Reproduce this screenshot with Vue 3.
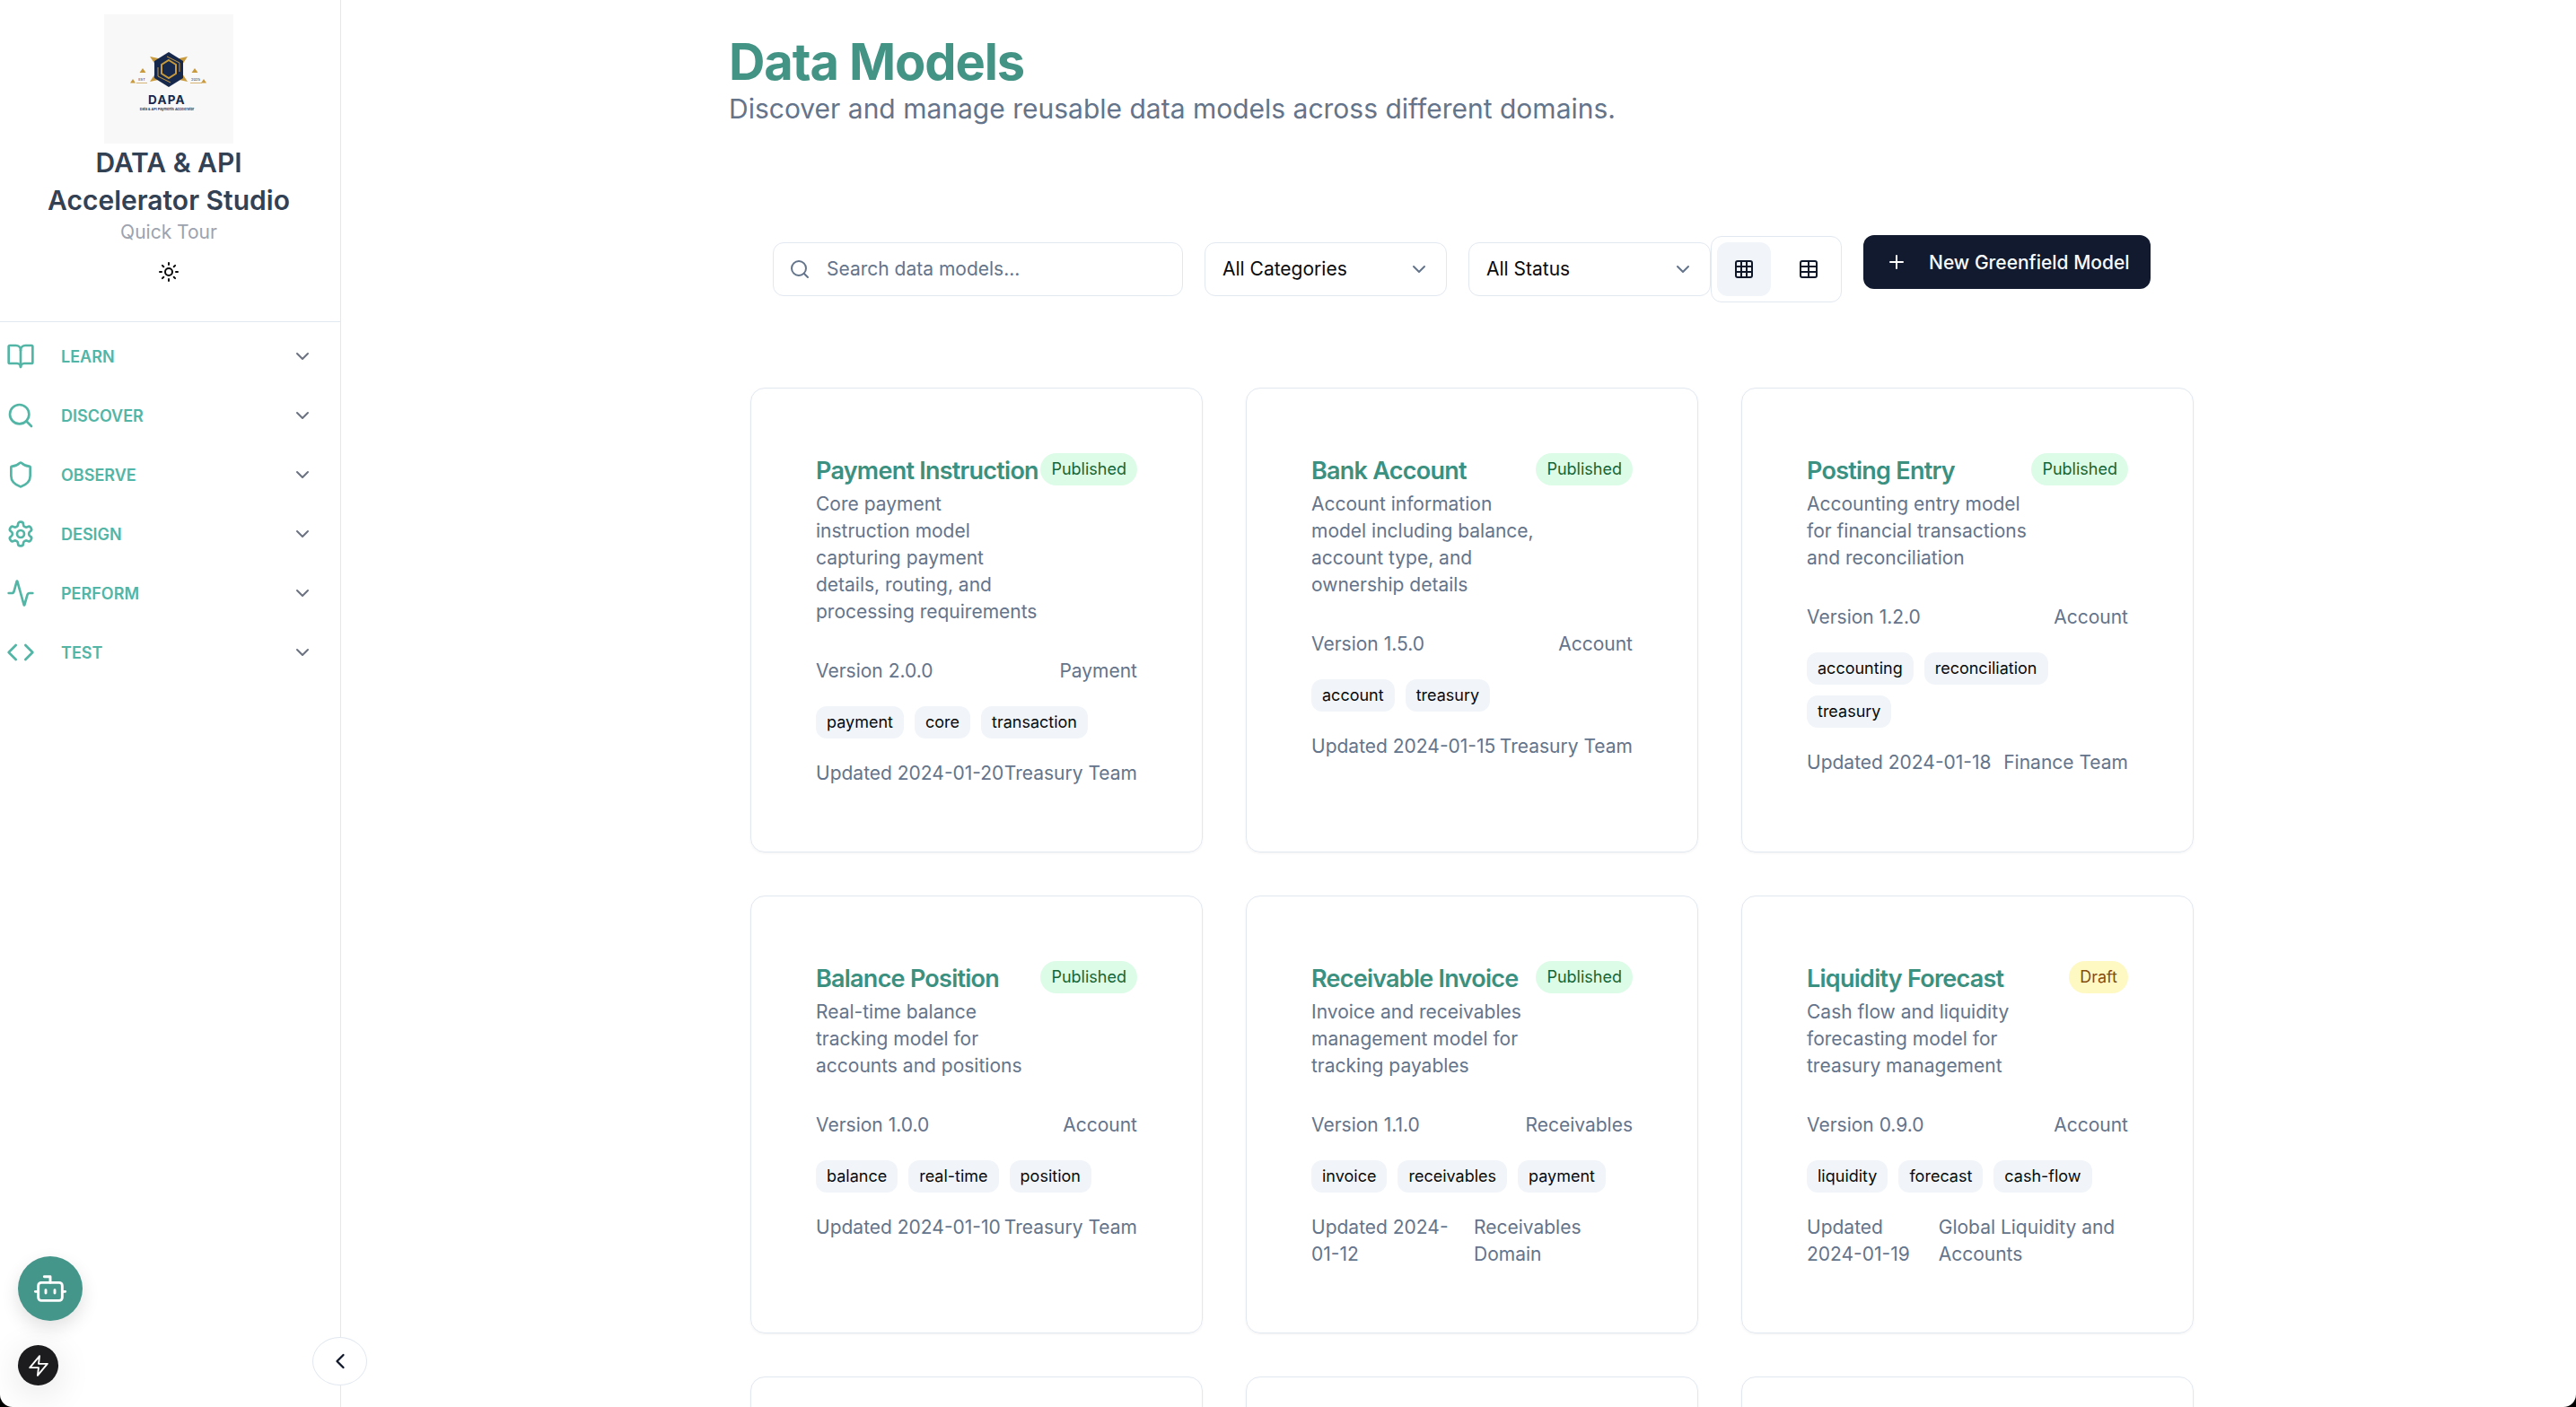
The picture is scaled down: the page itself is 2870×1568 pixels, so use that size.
<script setup>
const menu = [
  { label: 'LEARN', icon: 'book' },
  { label: 'DISCOVER', icon: 'search' },
  { label: 'OBSERVE', icon: 'shield' },
  { label: 'DESIGN', icon: 'gear' },
  { label: 'PERFORM', icon: 'pulse' },
  { label: 'TEST', icon: 'code' }
]

const models = [
  { name: 'Payment Instruction', status: 'Published', desc: 'Core payment instruction model capturing payment details, routing, and processing requirements', version: '2.0.0', category: 'Payment', tags: ['payment', 'core', 'transaction'], updated: '2024-01-20', owner: 'Treasury Team' },
  { name: 'Bank Account', status: 'Published', desc: 'Account information model including balance, account type, and ownership details', version: '1.5.0', category: 'Account', tags: ['account', 'treasury'], updated: '2024-01-15', owner: 'Treasury Team' },
  { name: 'Posting Entry', status: 'Published', desc: 'Accounting entry model for financial transactions and reconciliation', version: '1.2.0', category: 'Account', tags: ['accounting', 'reconciliation', 'treasury'], updated: '2024-01-18', owner: 'Finance Team' },
  { name: 'Balance Position', status: 'Published', desc: 'Real-time balance tracking model for accounts and positions', version: '1.0.0', category: 'Account', tags: ['balance', 'real-time', 'position'], updated: '2024-01-10', owner: 'Treasury Team' },
  { name: 'Receivable Invoice', status: 'Published', desc: 'Invoice and receivables management model for tracking payables', version: '1.1.0', category: 'Receivables', tags: ['invoice', 'receivables', 'payment'], updated: '2024-01-12', owner: 'Receivables Domain' },
  { name: 'Liquidity Forecast', status: 'Draft', desc: 'Cash flow and liquidity forecasting model for treasury management', version: '0.9.0', category: 'Account', tags: ['liquidity', 'forecast', 'cash-flow'], updated: '2024-01-19', owner: 'Global Liquidity and Accounts' }
]
</script>

<template>
  <div class="page">
    <aside class="sidebar">
      <div class="brand">
        <svg class="logo" viewBox="0 0 144 144">
          <rect width="144" height="144" fill="#f8f8f8" />
          <path d="M51 47l14 3-6 9zM93 47l-14 3 6 9zM51 75l14-3-6-9zM93 75l-14-3 6-9z" fill="#c99a3c" />
          <path d="M72 42l16 10v19l-16 10-16-10V52z" fill="#16294d" />
          <path d="M72 51l8 5v10l-8 5-8-5V56z" fill="none" stroke="#c99a3c" stroke-width="2" />
          <path d="M70 47l14 7v10M74 76l-14-7v-10" fill="none" stroke="#c99a3c" stroke-width="1" />
          <path d="M43 60l3.500 5h-7zM101 60l3.500 5h-7zM32 72l3 4.500h-6zM111 72l3 4.500h-6z" fill="#c99a3c" />
          <path d="M36 76.500h12M96 76.500h13" stroke="#c99a3c" stroke-width=".7" />
          <text x="42" y="74" class="logo-tiny">EST</text>
          <text x="102" y="74" class="logo-tiny">2025</text>
          <text x="70" y="100" class="logo-name">DAPA</text>
          <text x="70" y="106.500" class="logo-sub">Data &amp; API Payments Accelerator</text>
        </svg>
        <div class="brand-title">DATA &amp; API<br />Accelerator Studio</div>
        <div class="tour">Quick Tour</div>
        <svg class="sun" viewBox="0 0 24 24" fill="none" stroke="#0a0a0a" stroke-width="2" stroke-linecap="round">
          <circle cx="12" cy="12" r="4" />
          <path d="M12 2v2M12 20v2M4.900 4.900l1.400 1.400M17.700 17.700l1.400 1.400M2 12h2M20 12h2M6.300 17.700l-1.400 1.400M19.100 4.900l-1.400 1.400" />
        </svg>
      </div>
      <nav class="menu">
        <div v-for="item in menu" :key="item.label" class="menu-row">
          <svg class="menu-icon" viewBox="0 0 24 24" fill="none" stroke="currentColor" stroke-width="2" stroke-linecap="round" stroke-linejoin="round">
            <template v-if="item.icon === 'book'">
              <path d="M12 7v14" />
              <path d="M3 18a1 1 0 0 1-1-1V4a1 1 0 0 1 1-1h5a4 4 0 0 1 4 4 4 4 0 0 1 4-4h5a1 1 0 0 1 1 1v13a1 1 0 0 1-1 1h-6a3 3 0 0 0-3 3 3 3 0 0 0-3-3z" />
            </template>
            <template v-else-if="item.icon === 'search'">
              <path d="m21 21-4.300-4.300" />
              <circle cx="11" cy="11" r="8" />
            </template>
            <path v-else-if="item.icon === 'shield'" d="M20 13c0 5-3.500 7.500-7.660 8.950a1 1 0 0 1-.67-.01C7.500 20.500 4 18 4 13V6a1 1 0 0 1 1-1c2 0 4.500-1.200 6.240-2.720a1.170 1.170 0 0 1 1.520 0C14.510 3.810 17 5 19 5a1 1 0 0 1 1 1z" />
            <template v-else-if="item.icon === 'gear'">
              <path d="M12.220 2h-.44a2 2 0 0 0-2 2v.18a2 2 0 0 1-1 1.730l-.43.25a2 2 0 0 1-2 0l-.15-.08a2 2 0 0 0-2.730.73l-.22.38a2 2 0 0 0 .73 2.730l.15.1a2 2 0 0 1 1 1.720v.51a2 2 0 0 1-1 1.740l-.15.09a2 2 0 0 0-.73 2.730l.22.38a2 2 0 0 0 2.730.73l.15-.08a2 2 0 0 1 2 0l.43.25a2 2 0 0 1 1 1.730V20a2 2 0 0 0 2 2h.44a2 2 0 0 0 2-2v-.18a2 2 0 0 1 1-1.730l.43-.25a2 2 0 0 1 2 0l.15.08a2 2 0 0 0 2.730-.73l.22-.39a2 2 0 0 0-.73-2.730l-.15-.08a2 2 0 0 1-1-1.740v-.5a2 2 0 0 1 1-1.740l.15-.09a2 2 0 0 0 .73-2.730l-.22-.38a2 2 0 0 0-2.730-.73l-.15.08a2 2 0 0 1-2 0l-.43-.25a2 2 0 0 1-1-1.730V4a2 2 0 0 0-2-2z" />
              <circle cx="12" cy="12" r="3" />
            </template>
            <path v-else-if="item.icon === 'pulse'" d="M22 12h-2.480a2 2 0 0 0-1.930 1.460l-2.350 8.360a.25.25 0 0 1-.48 0L9.240 2.180a.25.25 0 0 0-.48 0l-2.350 8.360A2 2 0 0 1 4.490 12H2" />
            <template v-else>
              <path d="m16 18 6-6-6-6" />
              <path d="m8 6-6 6 6 6" />
            </template>
          </svg>
          <span class="menu-label">{{ item.label }}</span>
          <svg class="menu-chevron" viewBox="0 0 24 24" fill="none" stroke="currentColor" stroke-width="2" stroke-linecap="round" stroke-linejoin="round"><path d="m6 9 6 6 6-6" /></svg>
        </div>
      </nav>
      <button class="collapse">
        <svg viewBox="0 0 24 24" fill="none" stroke="#0f172a" stroke-width="2" stroke-linecap="round" stroke-linejoin="round"><path d="m15 18-6-6 6-6" /></svg>
      </button>
    </aside>

    <main class="main">
      <h1 class="title">Data Models</h1>
      <p class="subtitle">Discover and manage reusable data models across different domains.</p>

      <div class="toolbar">
        <div class="filters">
          <div class="search">
            <svg viewBox="0 0 24 24" fill="none" stroke="#64748b" stroke-width="2" stroke-linecap="round"><path d="m21 21-4.300-4.300" /><circle cx="11" cy="11" r="8" /></svg>
            <span>Search data models...</span>
          </div>
          <div class="select cat">
            <span>All Categories</span>
            <svg viewBox="0 0 24 24" fill="none" stroke="#64748b" stroke-width="2" stroke-linecap="round" stroke-linejoin="round"><path d="m6 9 6 6 6-6" /></svg>
          </div>
          <div class="select status">
            <span>All Status</span>
            <svg viewBox="0 0 24 24" fill="none" stroke="#64748b" stroke-width="2" stroke-linecap="round" stroke-linejoin="round"><path d="m6 9 6 6 6-6" /></svg>
          </div>
          <div class="views">
            <button class="view active">
              <svg viewBox="0 0 24 24" fill="none" stroke="#0f172a" stroke-width="2" stroke-linejoin="round"><rect x="3" y="3" width="18" height="18" rx="2" /><path d="M3 9h18M3 15h18M9 3v18M15 3v18" /></svg>
            </button>
            <button class="view">
              <svg viewBox="0 0 24 24" fill="none" stroke="#0f172a" stroke-width="2" stroke-linejoin="round"><rect x="3" y="3" width="18" height="18" rx="2" /><path d="M3 9h18M3 15h18M12 3v18" /></svg>
            </button>
          </div>
        </div>
        <button class="new-btn">
          <svg viewBox="0 0 24 24" fill="none" stroke="#fff" stroke-width="2" stroke-linecap="round"><path d="M5 12h14M12 5v14" /></svg>
          <span>New Greenfield Model</span>
        </button>
      </div>

      <div class="grid">
        <article v-for="m in models" :key="m.name" class="card">
          <div class="card-head">
            <div class="card-text">
              <h3 class="card-title">{{ m.name }}</h3>
              <p class="card-desc">{{ m.desc }}</p>
            </div>
            <span class="badge" :class="m.status === 'Draft' ? 'draft' : 'published'">{{ m.status }}</span>
          </div>
          <div class="meta">
            <span>Version {{ m.version }}</span>
            <span>{{ m.category }}</span>
          </div>
          <div class="tags">
            <span v-for="t in m.tags" :key="t" class="tag">{{ t }}</span>
          </div>
          <div class="meta foot">
            <span>Updated {{ m.updated }}</span>
            <span>{{ m.owner }}</span>
          </div>
        </article>
        <article v-for="n in 3" :key="n" class="card blank"></article>
      </div>
    </main>

    <button class="fab">
      <svg viewBox="0 0 24 24" fill="none" stroke="#fff" stroke-width="1.750" stroke-linecap="round" stroke-linejoin="round">
        <path d="M12 8V4H8" />
        <rect x="4" y="8" width="16" height="12" rx="2" />
        <path d="M2 14h2M20 14h2M15 13v2M9 13v2" />
      </svg>
    </button>
    <button class="bolt">
      <svg viewBox="0 0 24 24" fill="none" stroke="#fff" stroke-width="1.750" stroke-linecap="round" stroke-linejoin="round"><path d="M13 2 3 14h9l-1 8 10-12h-9l1-8z" /></svg>
    </button>
  </div>
</template>

<style scoped>
.page {
  position: relative;
  display: flex;
  height: 1568px;
  overflow: hidden;
  background: #fff;
  border-radius: 0 0 14px 14px;
  font-family: Inter, "Liberation Sans", sans-serif;
}
.sidebar {
  position: relative;
  width: 380px;
  flex-shrink: 0;
  box-sizing: border-box;
  border-right: 1px solid #e2e8f0;
}
.brand {
  display: flex;
  flex-direction: column;
  align-items: center;
  height: 359px;
  padding: 16px 3px 0 0;
  box-sizing: border-box;
  border-bottom: 1px solid #e2e8f0;
}
.logo {
  width: 144px;
  height: 144px;
  flex-shrink: 0;
}
.logo-tiny {
  font-size: 4px;
  fill: #16294d;
  text-anchor: middle;
}
.logo-name {
  font-size: 13.500px;
  font-weight: 700;
  letter-spacing: 1.200px;
  fill: #16294d;
  text-anchor: middle;
}
.logo-sub {
  font-size: 3.800px;
  font-weight: 600;
  fill: #16294d;
  text-anchor: middle;
}
.brand-title {
  font-size: 30px;
  line-height: 42px;
  font-weight: 600;
  color: #334155;
  text-align: center;
}
.tour {
  font-size: 21px;
  line-height: 30px;
  color: #9ca3af;
}
.sun {
  width: 24px;
  height: 24px;
  margin-top: 17px;
}
.menu {
  display: flex;
  flex-direction: column;
  padding-top: 5px;
}
.menu-row {
  display: flex;
  align-items: center;
  height: 66px;
  padding: 0 30px 0 7px;
  color: #52b5a5;
}
.menu-icon {
  width: 32px;
  height: 32px;
  flex-shrink: 0;
}
.menu-label {
  margin-left: 29px;
  font-size: 18px;
  font-weight: 600;
  flex: 1;
}
.menu-chevron {
  width: 24px;
  height: 24px;
  color: #6b7280;
}
.collapse {
  position: absolute;
  right: -30px;
  top: 1490px;
  width: 61px;
  height: 54px;
  padding: 0;
  display: flex;
  align-items: center;
  justify-content: center;
  background: #fff;
  border: 1px solid #e2e8f0;
  border-radius: 50%;
  z-index: 2;
}
.collapse svg {
  width: 28px;
  height: 28px;
}
.main {
  flex: 1;
  min-width: 0;
  padding-left: 432px;
}
.title {
  margin: 38px 0 0;
  font-size: 56px;
  line-height: 62px;
  font-weight: 700;
  letter-spacing: -1.100px;
  color: #449485;
}
.subtitle {
  margin: 0;
  font-size: 30px;
  line-height: 42px;
  color: #64748b;
}
.toolbar {
  display: flex;
  align-items: flex-start;
  gap: 24px;
  margin: 120px 0 0 49px;
}
.filters {
  display: flex;
  align-items: center;
  height: 75px;
}
.search,
.select {
  display: flex;
  align-items: center;
  box-sizing: border-box;
  height: 60px;
  border: 1px solid #e2e8f0;
  border-radius: 12px;
  font-size: 21px;
  background: #fff;
}
.search {
  width: 457px;
  padding-left: 17px;
  color: #64748b;
}
.search svg {
  width: 24px;
  height: 24px;
  margin-right: 18px;
}
.select {
  justify-content: space-between;
  margin-left: 24px;
  padding: 0 18px 0 19px;
  color: #0a0a0a;
}
.select svg {
  width: 24px;
  height: 24px;
}
.cat {
  width: 270px;
}
.status {
  width: 270px;
}
.views {
  display: flex;
  gap: 12px;
  box-sizing: border-box;
  padding: 6px;
  border: 1px solid #e2e8f0;
  border-radius: 12px;
}
.view {
  width: 60px;
  height: 60px;
  padding: 0;
  display: flex;
  align-items: center;
  justify-content: center;
  background: transparent;
  border: 0;
  border-radius: 12px;
}
.view.active {
  background: #f1f5f9;
}
.view svg {
  width: 24px;
  height: 24px;
}
.new-btn {
  display: flex;
  align-items: center;
  width: 320px;
  height: 60px;
  padding: 0 0 0 25px;
  box-sizing: border-box;
  background: #111a2e;
  border: 0;
  border-radius: 12px;
  color: #f8fafc;
  font-family: inherit;
  font-size: 21px;
  font-weight: 500;
}
.new-btn svg {
  width: 24px;
  height: 24px;
  margin-right: 24px;
}
.grid {
  display: grid;
  grid-template-columns: repeat(3, 504px);
  gap: 48px;
  margin: 95px 0 0 24px;
}
.card {
  box-sizing: border-box;
  padding: 72px;
  border: 1px solid #e2e8f0;
  border-radius: 16px;
  box-shadow: 0 1px 3px rgba(15, 23, 42, 0.05);
}
.blank {
  height: 300px;
}
.card-head {
  display: flex;
  align-items: flex-start;
}
.card-text {
  flex: 1;
  min-width: 0;
}
.card-title {
  margin: 0 0 2px;
  font-size: 27px;
  line-height: 40px;
  font-weight: 600;
  letter-spacing: -0.750px;
  color: #3b9080;
}
.card-desc {
  margin: 0;
  font-size: 21px;
  line-height: 30px;
  color: #64748b;
}
.badge {
  flex-shrink: 0;
  padding: 0 12px;
  height: 36px;
  line-height: 36px;
  border-radius: 18px;
  font-size: 18px;
}
.published {
  background: #dcfce7;
  color: #166534;
}
.draft {
  background: #fef9c3;
  color: #854d0e;
}
.meta {
  display: flex;
  justify-content: space-between;
  margin-top: 36px;
  font-size: 21px;
  line-height: 30px;
  color: #64748b;
}
.tags {
  display: flex;
  flex-wrap: wrap;
  gap: 12px;
  margin-top: 24px;
}
.tag {
  height: 36px;
  padding: 0 12px;
  line-height: 36px;
  border-radius: 12px;
  background: #f1f5f9;
  font-size: 18px;
  color: #0a0a0a;
}
.foot {
  margin-top: 24px;
}
.fab {
  position: absolute;
  left: 20px;
  top: 1400px;
  width: 72px;
  height: 72px;
  padding: 0;
  display: flex;
  align-items: center;
  justify-content: center;
  border: 0;
  border-radius: 50%;
  background: #44958a;
  box-shadow: 0 8px 20px rgba(0, 0, 0, 0.12);
}
.fab svg {
  width: 40px;
  height: 40px;
}
.bolt {
  position: absolute;
  left: 20px;
  top: 1499px;
  width: 45px;
  height: 45px;
  padding: 0;
  display: flex;
  align-items: center;
  justify-content: center;
  border: 0;
  border-radius: 50%;
  background: #1c1c1f;
  box-shadow: 0 8px 40px rgba(0, 0, 0, 0.12);
}
.bolt svg {
  width: 26px;
  height: 26px;
}
</style>

<style>
html,
body {
  margin: 0;
  overflow: hidden;
  background: #000;
}
</style>
